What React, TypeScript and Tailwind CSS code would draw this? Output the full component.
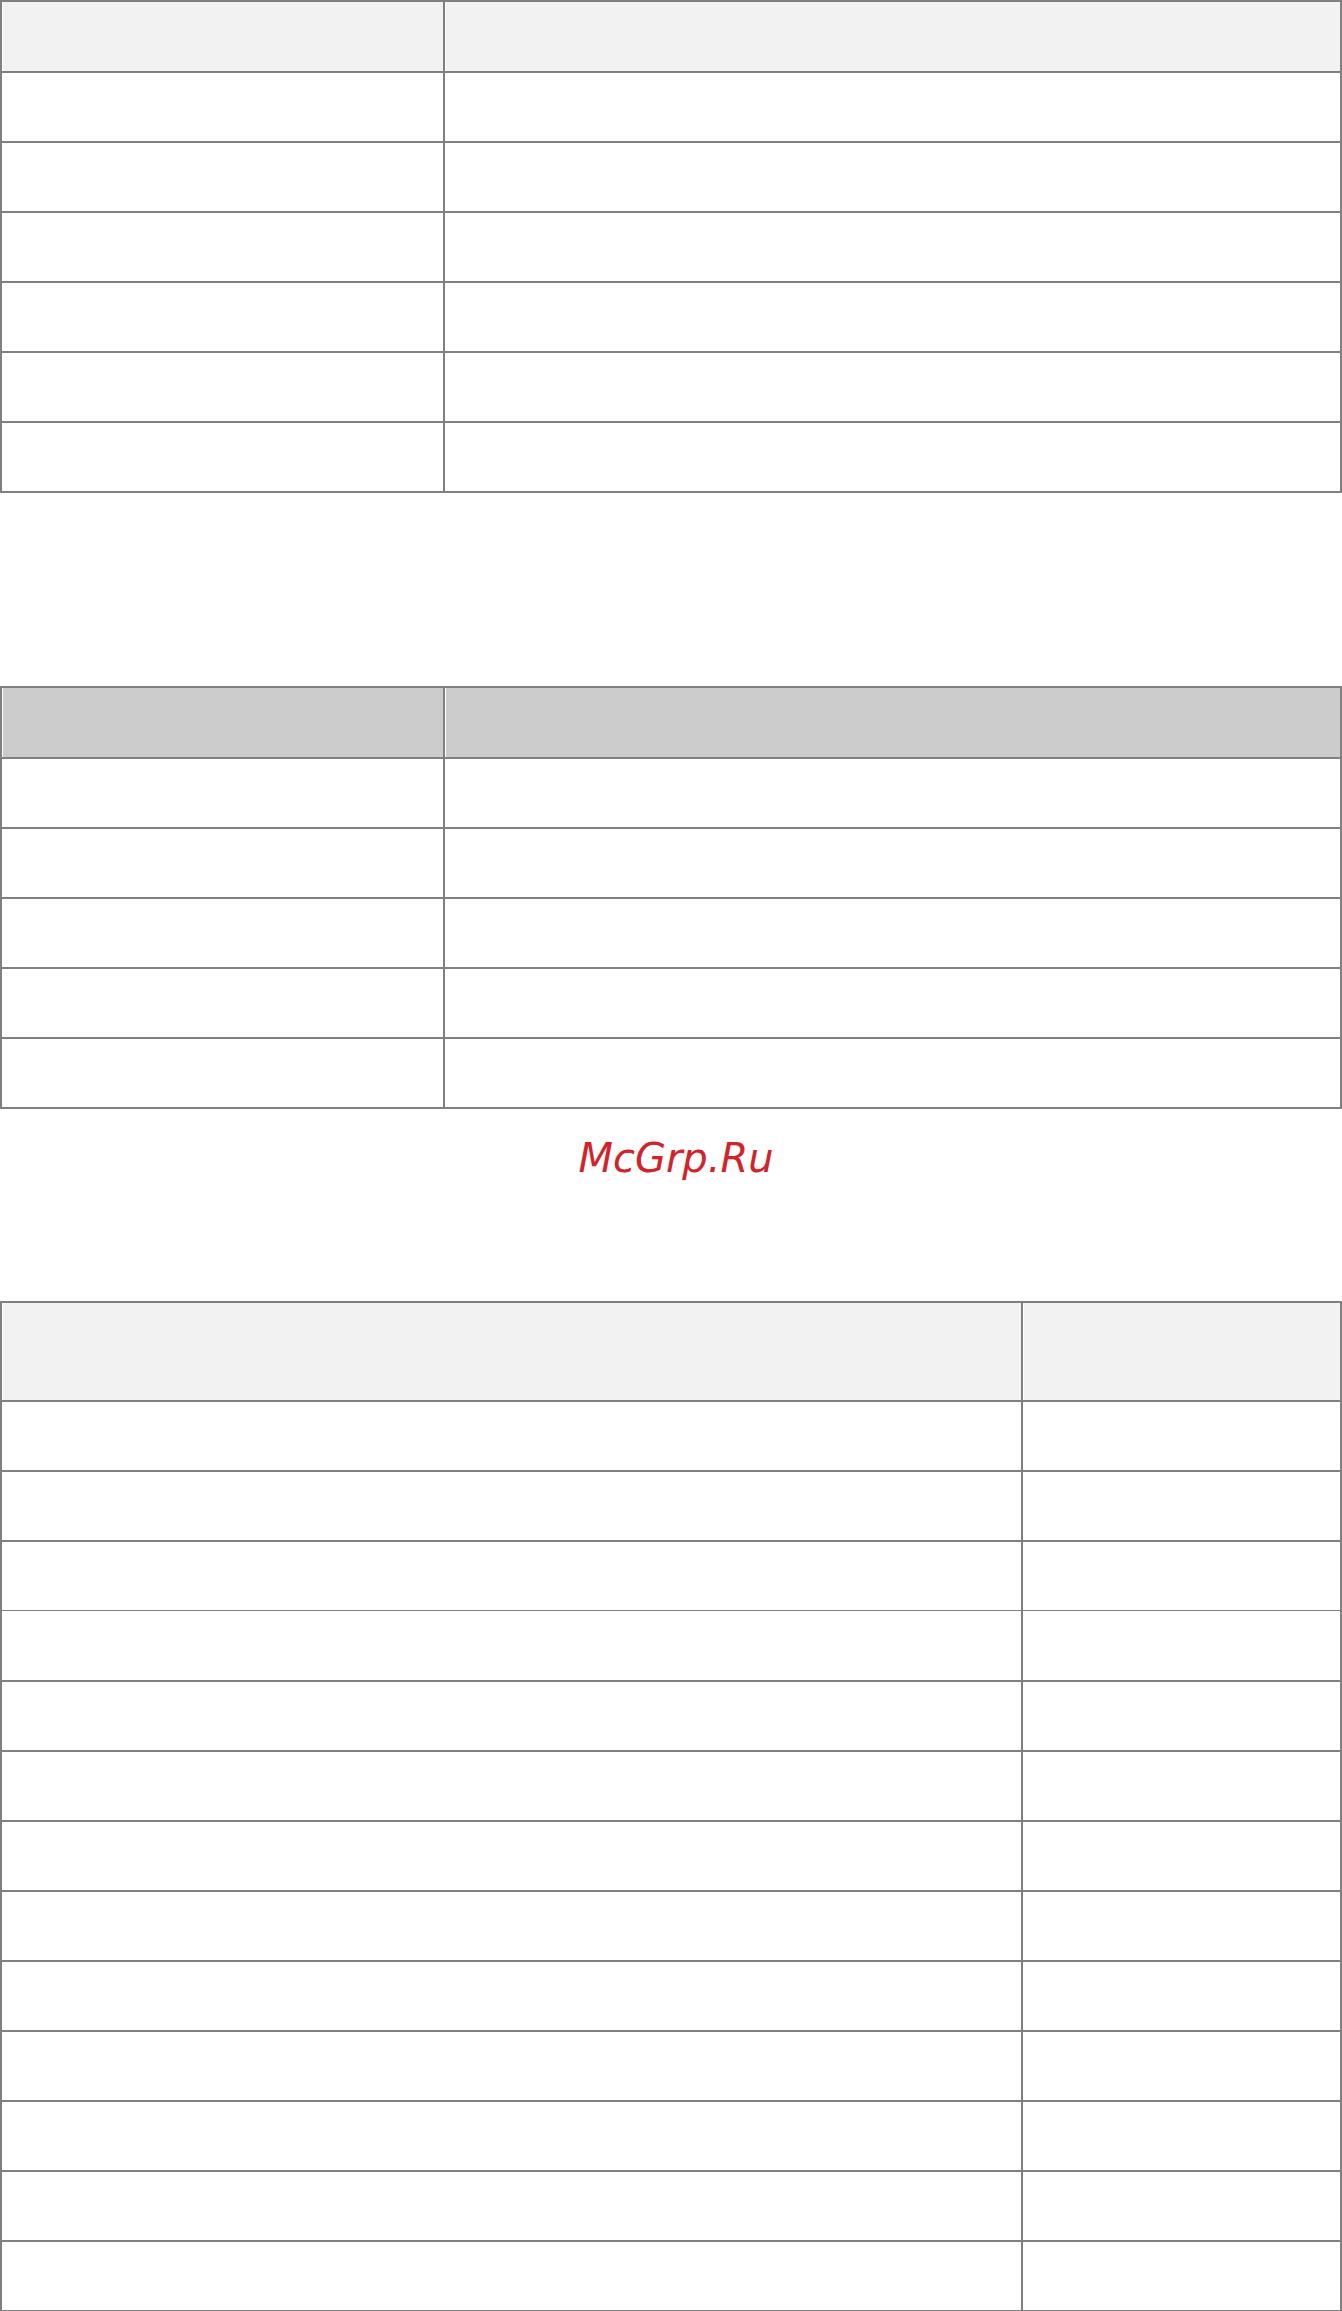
import React from "react";

type TableProps = {
  rows: number;
  headBg: string;
  headH: string;
  leftW: string;
  thinRow?: number;
};

const GridTable = ({ rows, headBg, headH, leftW, thinRow }: TableProps) => {
  return (
    <div className="w-full border-2 border-[#808080] bg-white">
      {/* header */}
      <div className={`flex ${headH} ${headBg}`}>
        <div className={`${leftW} h-full border-l border-white border-r-2 border-r-[#808080]`} />
        <div className="flex-1 h-full border-l border-white" />
      </div>
      {Array.from({ length: rows }).map((_, i) => (
        <div
          key={i}
          className={`flex h-[70px] border-[#808080] ${
            thinRow === i ? "border-t" : "border-t-2"
          }`}
        >
          <div className={`${leftW} h-full border-r-2 border-[#808080]`} />
          <div className="flex-1 h-full" />
        </div>
      ))}
    </div>
  );
};

export default function App() {
  return (
    <div className="w-[1342px] bg-white" style={{ fontFamily: '"DejaVu Sans", sans-serif' }}>
      <GridTable rows={6} headBg="bg-[#f2f2f2]" headH="h-[69px]" leftW="w-[443px]" />

      <div className="h-[193px]" />

      <GridTable rows={5} headBg="bg-[#cccccc]" headH="h-[69px]" leftW="w-[443px]" />

      {/* watermark */}
      <div className="h-[192px] pt-[29px] text-center">
        <span className="pl-[10px] text-[40px] leading-[40px] italic text-[#d2232a] font-['DejaVu_Sans',sans-serif]">
          McGrp.Ru
        </span>
      </div>

      <GridTable rows={13} headBg="bg-[#f2f2f2]" headH="h-[97px]" leftW="w-[1021px]" thinRow={3} />
    </div>
  );
}
